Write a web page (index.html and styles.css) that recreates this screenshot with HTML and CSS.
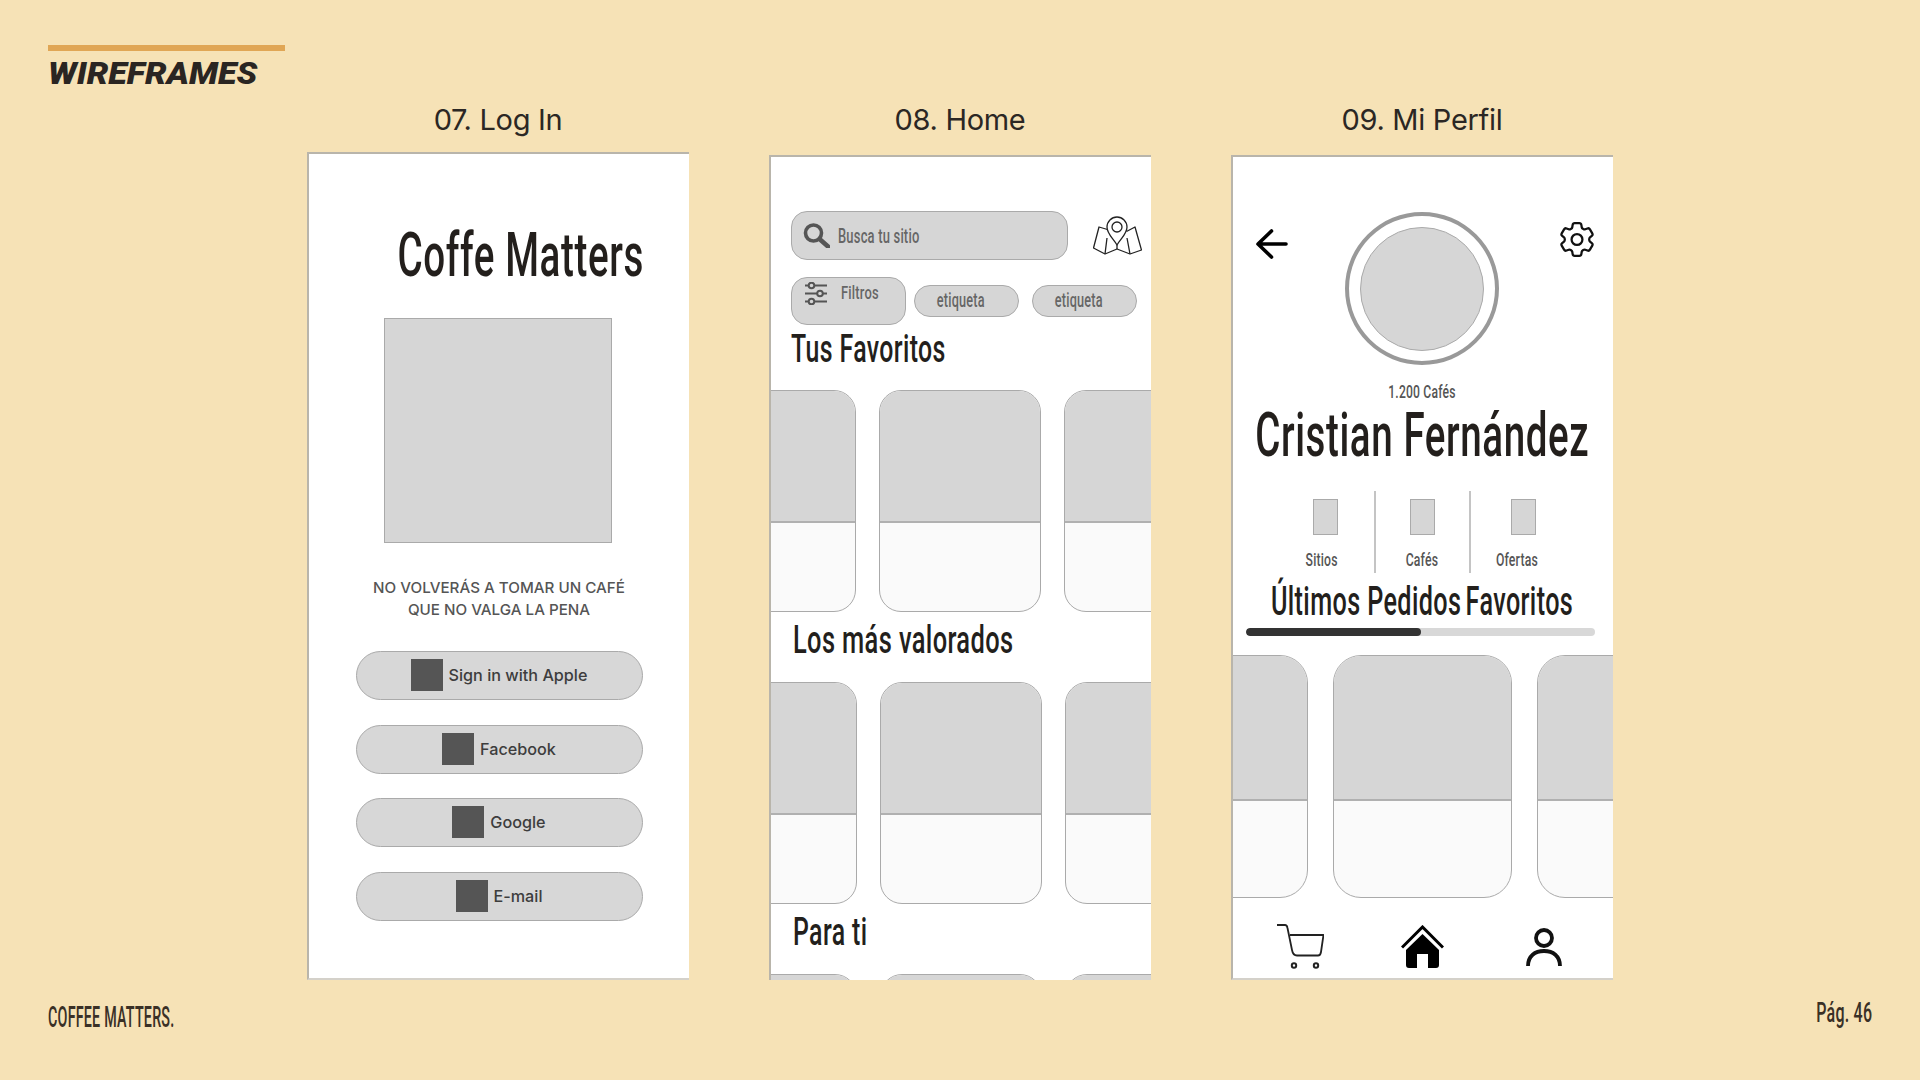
FILE: index.html
```html
<!DOCTYPE html>
<html lang="es">
<head>
<meta charset="utf-8">
<title>Wireframes</title>
<link rel="stylesheet" href="styles.css">
</head>
<body>
<main class="slide">
  <header class="head">
    <div class="head-bar"></div>
    <h1 class="head-title"><span class="head-text">WIREFRAMES</span></h1>
  </header>

  <section class="screens">
    <div class="screen">
      <h2 class="screen-label">07. Log In</h2>
      <div class="phone phone-login">
        <div class="brand"><span class="c brand-text">Coffe Matters</span></div>
        <div class="login-image"></div>
        <p class="tagline">NO VOLVERÁS A TOMAR UN CAFÉ<br>QUE NO VALGA LA PENA</p>
        <div class="login-buttons">
          <div class="login-btn"><span class="login-ico"></span>Sign in with Apple</div>
          <div class="login-btn"><span class="login-ico"></span>Facebook</div>
          <div class="login-btn"><span class="login-ico"></span>Google</div>
          <div class="login-btn"><span class="login-ico"></span>E-mail</div>
        </div>
      </div>
    </div>

    <div class="screen">
      <h2 class="screen-label label-low">08. Home</h2>
      <div class="phone phone-home">
        <div class="search-row">
          <div class="search">
            <svg class="ico-search" viewBox="0 0 27 25" width="27" height="25"><circle cx="10.5" cy="10" r="8" fill="none" stroke="#555" stroke-width="3.6"/><path d="M16.5 16 L25 23.5" stroke="#555" stroke-width="4.6" stroke-linecap="round"/></svg>
            <span class="c search-text">Busca tu sitio</span>
          </div>
          <svg class="ico-map" viewBox="0 0 49 39" width="49" height="39" fill="none" stroke="#222" stroke-width="1.3" stroke-linejoin="round"><path d="M14.5 13.5 L6 11 L0.5 32 L12 38 L24 33 L37 38 L48.5 34 L42 11 L33.5 15.5"/><path d="M14 22 L12 38 M24 29 V33 M34 22 L37 38"/><path d="M24 29 C20 22 14 18 14 11 A10 10 0 0 1 34 11 C34 18 28 22 24 29 Z" fill="#fff"/><circle cx="24" cy="11" r="5"/></svg>
        </div>
        <div class="chips">
          <div class="filter">
            <svg class="ico-sliders" viewBox="0 0 22 23" width="22" height="23" fill="none" stroke="#555" stroke-width="2"><path d="M0 3.5 H22 M0 11.5 H22 M0 19.5 H22"/><circle cx="6.5" cy="3.5" r="2.8" fill="#d6d6d6"/><circle cx="15" cy="11.5" r="2.8" fill="#d6d6d6"/><circle cx="6.5" cy="19.5" r="2.8" fill="#d6d6d6"/></svg>
            <span class="c filter-text">Filtros</span>
          </div>
          <div class="chip"><span class="c chip-text">etiqueta</span></div>
          <div class="chip chip-last"><span class="c chip-text">etiqueta</span></div>
        </div>
        <h3 class="section section-first"><span class="c section-text">Tus Favoritos</span></h3>
        <div class="cards">
          <div class="card"><div class="card-img"></div><div class="card-body"></div></div>
          <div class="card"><div class="card-img"></div><div class="card-body"></div></div>
          <div class="card"><div class="card-img"></div><div class="card-body"></div></div>
        </div>
        <h3 class="section section-next"><span class="c section-text section-wide">Los más valorados</span></h3>
        <div class="cards cards-shift">
          <div class="card"><div class="card-img"></div><div class="card-body"></div></div>
          <div class="card"><div class="card-img"></div><div class="card-body"></div></div>
          <div class="card"><div class="card-img"></div><div class="card-body"></div></div>
        </div>
        <h3 class="section section-next"><span class="c section-text">Para ti</span></h3>
        <div class="cards cards-shift">
          <div class="card"><div class="card-img"></div><div class="card-body"></div></div>
          <div class="card"><div class="card-img"></div><div class="card-body"></div></div>
          <div class="card"><div class="card-img"></div><div class="card-body"></div></div>
        </div>
      </div>
    </div>

    <div class="screen">
      <h2 class="screen-label label-low">09. Mi Perfil</h2>
      <div class="phone phone-profile">
        <div class="profile-top">
          <svg class="ico-back" viewBox="0 0 32 30" width="32" height="30" fill="none" stroke="#000" stroke-width="3.6" stroke-linecap="round" stroke-linejoin="round"><path d="M30 15 H3 M15.5 2 L2 15 L15.5 28"/></svg>
          <div class="avatar-ring"><div class="avatar"></div></div>
          <svg class="ico-gear" viewBox="2.6 2.4 18.8 19.2" width="34" height="35" fill="none" stroke="#111" stroke-width="1.25" stroke-linejoin="round"><path d="M9.594 3.94c.09-.542.56-.94 1.11-.94h2.593c.55 0 1.02.398 1.11.94l.213 1.281c.063.374.313.686.645.87.074.04.147.083.22.127.325.196.72.257 1.075.124l1.217-.456a1.125 1.125 0 0 1 1.37.49l1.296 2.247a1.125 1.125 0 0 1-.26 1.431l-1.003.827c-.293.241-.438.613-.43.992a7.723 7.723 0 0 1 0 .255c-.008.378.137.75.43.991l1.004.827c.424.35.534.955.26 1.43l-1.298 2.247a1.125 1.125 0 0 1-1.369.491l-1.217-.456c-.355-.133-.75-.072-1.076.124a6.47 6.47 0 0 1-.22.128c-.331.183-.581.495-.644.869l-.213 1.281c-.09.543-.56.94-1.11.94h-2.594c-.55 0-1.019-.398-1.11-.94l-.213-1.281c-.062-.374-.312-.686-.644-.87a6.52 6.52 0 0 1-.22-.127c-.325-.196-.72-.257-1.076-.124l-1.217.456a1.125 1.125 0 0 1-1.369-.49l-1.297-2.247a1.125 1.125 0 0 1 .26-1.431l1.004-.827c.292-.24.437-.613.43-.991a6.932 6.932 0 0 1 0-.255c.007-.38-.138-.751-.43-.992l-1.004-.827a1.125 1.125 0 0 1-.26-1.43l1.297-2.247a1.125 1.125 0 0 1 1.37-.491l1.216.456c.356.133.751.072 1.076-.124.072-.044.146-.086.22-.128.332-.183.582-.495.644-.869l.214-1.28Z"/><circle cx="12" cy="12" r="3"/></svg>
        </div>
        <div class="cafes"><span class="c cafes-text">1.200 Cafés</span></div>
        <div class="name"><span class="c name-text">Cristian Fernández</span></div>
        <div class="stats">
          <div class="stat stat-a"><span class="stat-box"></span><span class="c stat-text">Sitios</span></div>
          <div class="stat stat-b"><span class="stat-box"></span><span class="c stat-text">Cafés</span></div>
          <div class="stat stat-c"><span class="stat-box"></span><span class="c stat-text">Ofertas</span></div>
        </div>
        <div class="tabs">
          <span class="tab tab-a"><span class="c tab-text">Últimos Pedidos</span></span>
          <span class="tab tab-b"><span class="c tab-text">Favoritos</span></span>
        </div>
        <div class="progress"><div class="progress-fill"></div></div>
        <div class="cards cards-profile">
          <div class="card"><div class="card-img"></div><div class="card-body"></div></div>
          <div class="card"><div class="card-img"></div><div class="card-body"></div></div>
          <div class="card"><div class="card-img"></div><div class="card-body"></div></div>
        </div>
        <nav class="tabbar">
          <svg viewBox="0 0 47 45" width="47" height="45" fill="none" stroke="#222" stroke-width="1.8" stroke-linejoin="round"><path d="M0 1 H8 Q10 1 10.5 4 L15 26 Q16 31.5 20 31.5 H41 Q43.5 31.5 44 28 L46.5 11 H13"/><circle cx="17" cy="41.5" r="2.2" stroke-width="2"/><circle cx="39" cy="41.5" r="2.2" stroke-width="2"/></svg>
          <svg viewBox="0 0 43 43" width="43" height="43"><path d="M1 22.5 L21.5 2 L42 22.5" fill="none" stroke="#000" stroke-width="3"/><path d="M21.5 9 L38 25 V40 Q38 43 35 43 H27 V29 H16 V43 H8 Q5 43 5 40 V25 Z" fill="#000"/></svg>
          <svg viewBox="0 0 36 38" width="36" height="38" fill="none" stroke="#111" stroke-width="3.8"><circle cx="18" cy="10" r="8"/><path d="M2 38 C2 28 9 23 18 23 S34 28 34 38"/></svg>
        </nav>
      </div>
    </div>
  </section>

  <footer class="foot">
    <span class="c foot-brand">COFFEE MATTERS.</span>
    <span class="c foot-page">Pág. 46</span>
  </footer>
</main>
</body>
</html>
```
FILE: styles.css
```css
* { box-sizing: border-box; }
html, body { margin: 0; padding: 0; }
body { background: #f6e2b6; }
h1, h2, h3, p { margin: 0; font-weight: 400; }

.slide {
  width: 1920px;
  height: 1080px;
  overflow: hidden;
  padding: 45px 48px 0;
  display: flex;
  flex-direction: column;
  color: #231f1c;
}

/* condensed display text: no narrow face installed, so Roboto is narrowed */
.c {
  display: inline-block;
  flex-shrink: 0;
  white-space: nowrap;
  font-family: Roboto, "Liberation Sans", sans-serif;
  font-weight: 500;
  letter-spacing: .015em;
  transform: scaleX(var(--sx));
  transform-origin: center;
}

.head-bar { width: 237px; height: 6px; background: #e0a655; }
.head-title {
  margin-top: 6px;
  font: italic 900 31px/34px Roboto, "Liberation Sans", sans-serif;
  color: #2a2522;
}
.head-text { display: inline-block; transform: scaleX(1.1); transform-origin: left; }

.screens {
  display: flex;
  gap: 80px;
  padding-left: 259px;
  margin-top: 12px;
  height: 877px;
}
.screen { width: 382px; display: flex; flex-direction: column; }
.screen-label {
  font: 400 29px/34px Inter, "Liberation Sans", sans-serif;
  letter-spacing: -0.3px;
  text-align: center;
  margin-bottom: 15px;
  color: #2b2724;
}
.label-low { margin-bottom: 18px; }
.phone {
  flex: 1;
  background: #fff;
  border-top: 2px solid #b9b5ab;
  border-left: 2px solid #b9b5ab;
  overflow: hidden;
  min-height: 0;
}

/* Log in */
.phone-login {
  display: flex;
  flex-direction: column;
  align-items: center;
  border-bottom: 2px solid #d4d1ca;
}
.brand { margin-top: 70px; padding-left: 43px; height: 62px; display: flex; justify-content: center; }
.brand-text { --sx: .623; font-size: 62px; line-height: 62px; }
.login-image {
  margin: 32px 2px 0 0;
  width: 228px;
  height: 225px;
  background: #d6d6d6;
  border: 1.5px solid #aaa;
}
.tagline {
  margin-top: 34px;
  font: 500 15.2px/21.5px Inter, "Liberation Sans", sans-serif;
  color: #555;
  text-align: center;
}
.login-buttons { margin-top: 31px; display: flex; flex-direction: column; gap: 24.5px; }
.login-btn {
  width: 287px;
  height: 49px;
  border-radius: 25px;
  background: #d7d7d7;
  border: 1.5px solid #aaa;
  display: flex;
  align-items: center;
  justify-content: center;
  gap: 6px;
  padding-bottom: 1px;
  font: 500 16.2px/20px Inter, "Liberation Sans", sans-serif;
  color: #3d3d3d;
}
.login-ico { width: 32px; height: 32px; background: #555; }

/* Home */
.search-row { display: flex; align-items: flex-start; padding: 54px 0 0 20px; }
.search {
  width: 277px;
  height: 49px;
  border-radius: 16px;
  background: #d6d6d6;
  border: 1.5px solid #aaa;
  display: flex;
  align-items: center;
  padding-left: 11px;
}
.search-text { --sx: .617; font-size: 21px; line-height: 24px; color: #666; transform-origin: left; margin-left: 8px; }
.ico-map { margin: 5px 0 0 25px; }
.chips { display: flex; align-items: flex-start; padding: 17px 0 0 20px; }
.filter {
  width: 115px;
  height: 48px;
  border-radius: 16px;
  background: #d6d6d6;
  border: 1.5px solid #aaa;
  display: flex;
  align-items: flex-start;
  padding: 4px 0 0 13px;
}
.filter-text { --sx: .68; font-size: 19px; line-height: 20px; color: #666; transform-origin: left; margin: 1px 0 0 14px; }
.chip {
  width: 105px;
  height: 32px;
  margin: 8px 0 0 8px;
  border-radius: 16px;
  background: #d6d6d6;
  border: 1.5px solid #aaa;
  display: flex;
  align-items: center;
  justify-content: center;
  padding: 0 11px 2px 0;
}
.chip-last { margin-left: 13px; }
.chip-text { --sx: .634; font-size: 20px; line-height: 24px; color: #666; }

.section { height: 38px; }
.section-first { margin: 4.5px 0 22.5px 20px; }
.section-next { margin: 8.5px 0 23.5px 22px; }
.section-text { --sx: .638; font-size: 39px; line-height: 38px; transform-origin: left; }
.section-wide { --sx: .652; }

.cards {
  display: flex;
  justify-content: center;
  gap: 23px;
  height: 222px;
  margin-left: -2px;
  overflow: hidden;
}
.cards-shift { padding-left: 2px; }
.card {
  width: 162px;
  height: 222px;
  flex-shrink: 0;
  border: 1.5px solid #aaa;
  border-radius: 22px;
  overflow: hidden;
  display: flex;
  flex-direction: column;
  background: #fafafa;
}
.card-img { height: 132px; background: #d6d6d6; border-bottom: 2px solid #b0b0b0; }
.card-body { flex: 1; }

/* Profile */
.phone-profile { border-bottom: 2px solid #d4d1ca; }
.profile-top {
  display: grid;
  grid-template-columns: 1fr 154px 1fr;
  align-items: start;
  margin-left: -2px;
  padding: 55px 24px 0;
}
.ico-back { margin: 17px 0 0 1px; }
.ico-gear { margin: 10px -5px 0 0; justify-self: end; }
.avatar-ring {
  width: 154px;
  height: 153px;
  border-radius: 50%;
  border: 4px solid #999;
  display: flex;
  align-items: center;
  justify-content: center;
}
.avatar { width: 124px; height: 124px; border-radius: 50%; background: #d6d6d6; border: 1px solid #aaa; }
.cafes, .name, .tabs, .stats { display: flex; justify-content: center; margin-left: -2px; }
.cafes { margin-top: 17.5px; height: 18px; }
.cafes-text { --sx: .674; font-size: 18px; line-height: 18px; color: #555; }
.name { margin-top: 4px; height: 60px; }
.name-text { --sx: .632; font-size: 61px; line-height: 60px; }
.stats { margin-top: 26.5px; height: 82px; }
.stat {
  width: 96px;
  display: flex;
  flex-direction: column;
  align-items: center;
  padding-top: 8px;
}
.stat-b { width: 97px; border-left: 2px solid #c4c4c4; border-right: 2px solid #c4c4c4; }
.stat-box { width: 25px; height: 36px; background: #d6d6d6; border: 1.5px solid #aaa; margin-bottom: 15.5px; }
.stat-c .stat-box { margin-left: 9px; }
.stat-text { --sx: .68; font-size: 18px; line-height: 18px; color: #555; }
.stat-a .stat-text { margin-left: -7px; }
.stat-c .stat-text { margin-left: -4px; }
.tabs { margin-top: 9px; height: 40px; gap: 5px; }
.tab { display: flex; justify-content: center; }
.tab-a { width: 190px; }
.tab-b { width: 107px; }
.tab-text { --sx: .63; font-size: 40px; line-height: 40px; }
.progress { margin: 6px 0 0 13px; width: 349px; height: 8px; border-radius: 4px; background: #d8d8d8; overflow: hidden; }
.progress-fill { width: 175px; height: 8px; border-radius: 4px; background: #333; }
.cards-profile { margin-top: 19px; height: 243px; gap: 25px; }
.cards-profile .card { width: 179px; height: 243px; border-radius: 28px; }
.cards-profile .card-img { height: 145px; }
.tabbar {
  display: grid;
  grid-template-columns: repeat(3, 122px);
  justify-content: center;
  justify-items: center;
  align-items: center;
  margin-left: -2px;
  padding-top: 26px;
}

/* Footer */
.foot {
  margin-top: 21.5px;
  display: flex;
  justify-content: space-between;
  align-items: flex-start;
  color: #3a3026;
}
.foot-brand { --sx: .485; font-size: 29.5px; line-height: 30px; transform-origin: left; }
.foot-page { --sx: .57; font-size: 28px; line-height: 30px; transform-origin: right; margin-top: -3.5px; }
```
